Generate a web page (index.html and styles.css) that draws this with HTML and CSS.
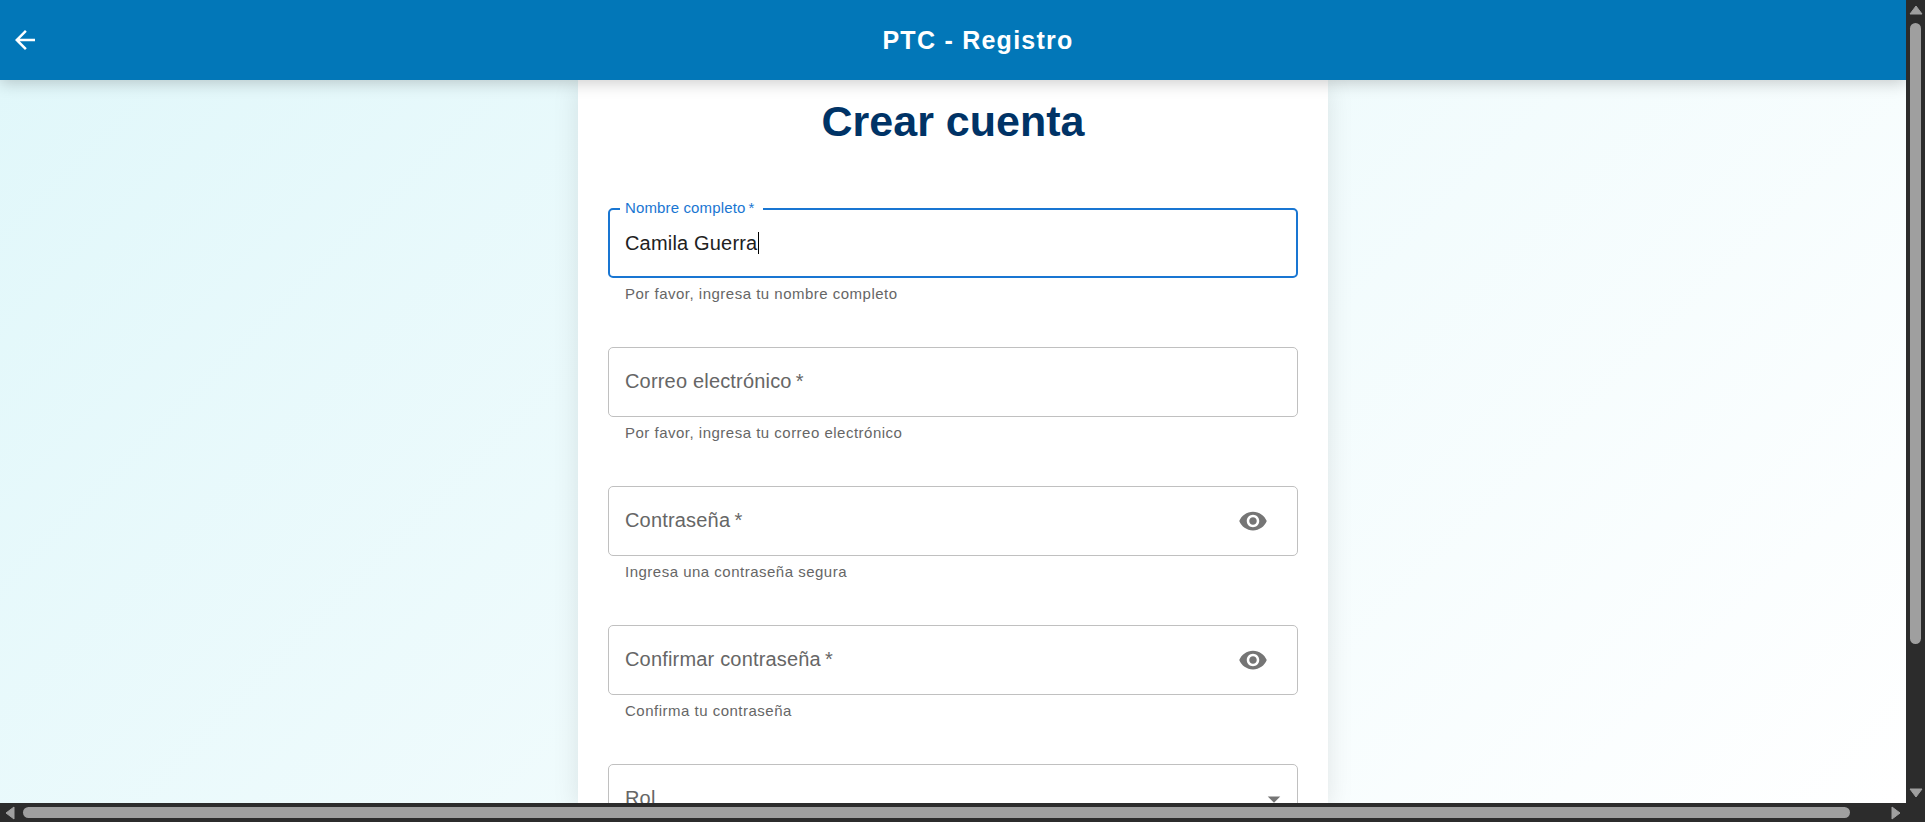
FILE: index.html
```html
<!DOCTYPE html>
<html lang="es">
<head>
<meta charset="utf-8">
<meta name="viewport" content="width=device-width, initial-scale=1">
<title>PTC - Registro</title>
<link rel="stylesheet" href="styles.css">
</head>
<body class="window">
  <div class="viewport">
    <header class="app-bar">
      <button class="icon-button back" type="button" aria-label="Volver">
        <svg class="icon" viewBox="0 0 24 24"><path d="M20 11H7.83l5.59-5.59L12 4l-8 8 8 8 1.41-1.41L7.83 13H20v-2z"/></svg>
      </button>
      <div class="app-title">PTC - Registro</div>
    </header>
    <main class="page">
      <form class="card">
        <h1 class="card-title">Crear cuenta</h1>

        <div class="field">
          <div class="control focused">
            <label class="label floating" for="nombre">Nombre completo&thinsp;*</label>
            <input class="input" id="nombre" type="text" value="Camila Guerra">
            <span class="caret"></span>
          </div>
          <p class="helper">Por favor, ingresa tu nombre completo</p>
        </div>

        <div class="field">
          <div class="control">
            <label class="label" for="correo">Correo electrónico&thinsp;*</label>
            <input class="input" id="correo" type="email">
          </div>
          <p class="helper">Por favor, ingresa tu correo electrónico</p>
        </div>

        <div class="field">
          <div class="control">
            <label class="label" for="clave">Contraseña&thinsp;*</label>
            <input class="input" id="clave" type="password">
            <button class="icon-button reveal" type="button" aria-label="Mostrar contraseña">
              <svg class="icon" viewBox="0 0 24 24"><path d="M12 4.500C7 4.500 2.730 7.610 1 12c1.730 4.390 6 7.500 11 7.500s9.270-3.110 11-7.500c-1.730-4.390-6-7.500-11-7.500zM12 17c-2.760 0-5-2.240-5-5s2.240-5 5-5 5 2.240 5 5-2.240 5-5 5zm0-8c-1.660 0-3 1.340-3 3s1.340 3 3 3 3-1.340 3-3-1.340-3-3-3z"/></svg>
            </button>
          </div>
          <p class="helper">Ingresa una contraseña segura</p>
        </div>

        <div class="field">
          <div class="control">
            <label class="label" for="clave2">Confirmar contraseña&thinsp;*</label>
            <input class="input" id="clave2" type="password">
            <button class="icon-button reveal" type="button" aria-label="Mostrar confirmación">
              <svg class="icon" viewBox="0 0 24 24"><path d="M12 4.500C7 4.500 2.730 7.610 1 12c1.730 4.390 6 7.500 11 7.500s9.270-3.110 11-7.500c-1.730-4.390-6-7.500-11-7.500zM12 17c-2.760 0-5-2.240-5-5s2.240-5 5-5 5 2.240 5 5-2.240 5-5 5zm0-8c-1.660 0-3 1.340-3 3s1.340 3 3 3 3-1.340 3-3-1.340-3-3-3z"/></svg>
            </button>
          </div>
          <p class="helper">Confirma tu contraseña</p>
        </div>

        <div class="field">
          <div class="control">
            <label class="label" for="rol">Rol</label>
            <select class="input" id="rol"><option value=""></option></select>
            <svg class="icon drop" viewBox="0 0 24 24"><path d="M7 10l5 5 5-5z"/></svg>
          </div>
        </div>
      </form>
    </main>
  </div>

  <div class="scrollbar vertical" aria-hidden="true">
    <svg class="arrow" viewBox="0 0 14 10"><path d="M7 1L13 9H1z"/></svg>
    <div class="track"><div class="thumb"></div></div>
    <svg class="arrow" viewBox="0 0 14 10"><path d="M7 9L1 1H13z"/></svg>
  </div>
  <div class="scrollbar horizontal" aria-hidden="true">
    <svg class="arrow" viewBox="0 0 10 14"><path d="M1 7L9 1V13z"/></svg>
    <div class="track"><div class="thumb"></div></div>
    <svg class="arrow" viewBox="0 0 10 14"><path d="M9 7L1 13V1z"/></svg>
  </div>
</body>
</html>
```

FILE: styles.css
```css
* {
  box-sizing: border-box;
}

.window {
  margin: 0;
  height: 100vh;
  display: grid;
  grid-template-columns: minmax(0, 1fr) 19px;
  grid-template-rows: minmax(0, 1fr) 19px;
  overflow: hidden;
  background: #2c2c2c;
  font-family: "Liberation Sans", Arial, sans-serif;
}

.viewport {
  display: flex;
  flex-direction: column;
  overflow: hidden;
  background: linear-gradient(135deg, #e0f7fa 0%, #ffffff 100%);
}

/* App bar */
.app-bar {
  position: relative;
  z-index: 1;
  flex: none;
  display: flex;
  align-items: center;
  height: 80px;
  background: #0277b8;
  color: #fff;
  box-shadow: 0 3px 15px rgba(0, 0, 0, 0.2);
}

.app-title {
  flex: 1;
  text-align: center;
  font-size: 25px;
  font-weight: 700;
  line-height: 40px;
  letter-spacing: 0.05em;
}

.icon-button {
  display: flex;
  flex: none;
  padding: 0;
  border: 0;
  background: none;
  color: inherit;
}

.back {
  padding: 10px;
}

.icon {
  display: block;
  width: 30px;
  height: 30px;
  fill: currentColor;
}

/* Form card */
.page {
  flex: 1;
  min-height: 0;
  display: flex;
  justify-content: center;
}

.card {
  width: 750px;
  max-width: 100%;
  padding: 15px 30px 0;
  background: #fff;
  box-shadow: 0 5px 25px rgba(0, 0, 0, 0.1);
}

.card-title {
  margin: 0 0 61px;
  text-align: center;
  font-size: 43px;
  font-weight: 700;
  line-height: 52px;
  color: #003366;
}

.field {
  margin-bottom: 40px;
}

.control {
  position: relative;
  display: flex;
  align-items: center;
  height: 70px;
  border: 1px solid #c0c0c0;
  border-radius: 5px;
  color: #757575;
}

.focused {
  border: 2px solid #1976d2;
}

.input {
  flex: 1;
  min-width: 0;
  height: 100%;
  padding: 0 15px;
  border: 0;
  outline: 0;
  appearance: none;
  background: transparent;
  font: inherit;
  font-size: 20px;
  letter-spacing: 0.009em;
  color: #212121;
}

.label {
  position: absolute;
  left: 16px;
  top: 19px;
  font-size: 20px;
  line-height: 29px;
  letter-spacing: 0.009em;
  color: #666;
  pointer-events: none;
}

.floating {
  left: 10px;
  top: -12px;
  padding: 0 8px 0 5px;
  background: #fff;
  font-size: 15px;
  line-height: 20px;
  color: #1976d2;
}

.caret {
  position: absolute;
  left: 148px;
  top: 22px;
  width: 1px;
  height: 22px;
  background: #000;
}

.reveal {
  margin-right: 29px;
}

.drop {
  position: absolute;
  right: 8px;
  top: 19px;
  pointer-events: none;
}

.helper {
  margin: 4px 17px 0;
  font-size: 15px;
  line-height: 24px;
  padding-bottom: 1px;
  letter-spacing: 0.033em;
  color: #666;
}

/* Window scrollbars */
.scrollbar {
  display: flex;
  align-items: center;
  gap: 8px;
  background: #2c2c2c;
}

.vertical {
  flex-direction: column;
  padding: 5px 0;
}

.horizontal {
  padding: 0 5px;
}

.arrow {
  display: block;
  flex: none;
  width: 14px;
  height: 10px;
  fill: #9f9f9f;
  stroke: #9f9f9f;
  stroke-width: 1;
  stroke-linejoin: round;
}

.horizontal .arrow {
  width: 10px;
  height: 14px;
}

.track {
  flex: 1;
  min-width: 0;
  min-height: 0;
}

.thumb {
  border-radius: 6px;
  background: #9f9f9f;
}

.vertical .thumb {
  width: 11px;
  height: 82%;
}

.horizontal .thumb {
  width: 98.2%;
  height: 11px;
}

.vertical .track {
  width: 11px;
}
```
